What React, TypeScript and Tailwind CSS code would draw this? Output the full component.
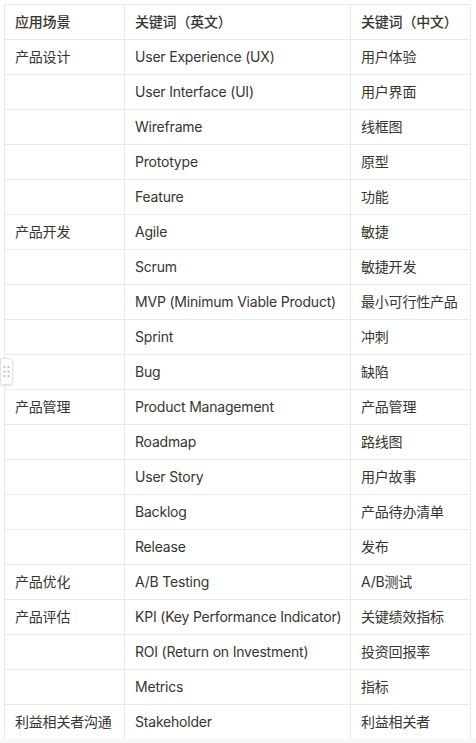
import React from "react";

const rows: [string, string, string][] = [
  ["产品设计", "User Experience (UX)", "用户体验"],
  ["", "User Interface (UI)", "用户界面"],
  ["", "Wireframe", "线框图"],
  ["", "Prototype", "原型"],
  ["", "Feature", "功能"],
  ["产品开发", "Agile", "敏捷"],
  ["", "Scrum", "敏捷开发"],
  ["", "MVP (Minimum Viable Product)", "最小可行性产品"],
  ["", "Sprint", "冲刺"],
  ["", "Bug", "缺陷"],
  ["产品管理", "Product Management", "产品管理"],
  ["", "Roadmap", "路线图"],
  ["", "User Story", "用户故事"],
  ["", "Backlog", "产品待办清单"],
  ["", "Release", "发布"],
  ["产品优化", "A/B Testing", "A/B测试"],
  ["产品评估", "KPI (Key Performance Indicator)", "关键绩效指标"],
  ["", "ROI (Return on Investment)", "投资回报率"],
  ["", "Metrics", "指标"],
  ["利益相关者沟通", "Stakeholder", "利益相关者"],
];

const cell =
  "h-[35px] flex items-center px-[10px] pb-[2px] border-r border-b border-[#e9e9e7] whitespace-nowrap overflow-hidden";

const App: React.FC = () => {
  return (
    <div
      className="w-[476px] h-[743px] bg-white overflow-hidden relative text-[14px] tracking-[-0.2px] text-[#37352f]"
      style={{ fontFamily: "Inter, 'Noto Sans CJK SC', sans-serif" }}
    >
      <div className="pt-[4px] pl-[4px]">
        <div className="grid grid-cols-[120px_226px_120px] w-[466px] border-l border-t border-[#e9e9e7]">
          <div className={`${cell} font-medium`}>应用场景</div>
          <div className={`${cell} font-medium`}>关键词（英文）</div>
          <div className={`${cell} font-medium`}>关键词（中文）</div>
          {rows.map((r, i) => (
            <React.Fragment key={i}>
              <div className={cell}>{r[0]}</div>
              <div className={cell}>{r[1]}</div>
              <div className={cell}>{r[2]}</div>
            </React.Fragment>
          ))}
        </div>
      </div>
      <div className="absolute left-0 right-0 bottom-0 h-[4px] bg-[#f7f7f7]" />
      <div className="absolute left-0 top-[358px] w-[13px] h-[27px] bg-white border border-[#e3e3e1] rounded-r-[4px] flex items-center justify-center shadow-sm">
        <svg width="7" height="13" viewBox="0 0 7 13">
          {[1.5, 5.5].map((x) =>
            [2, 6.5, 11].map((y) => <circle key={`${x}-${y}`} cx={x} cy={y} r="1.1" fill="#b8b7b4" />)
          )}
        </svg>
      </div>
    </div>
  );
};

export default App;
